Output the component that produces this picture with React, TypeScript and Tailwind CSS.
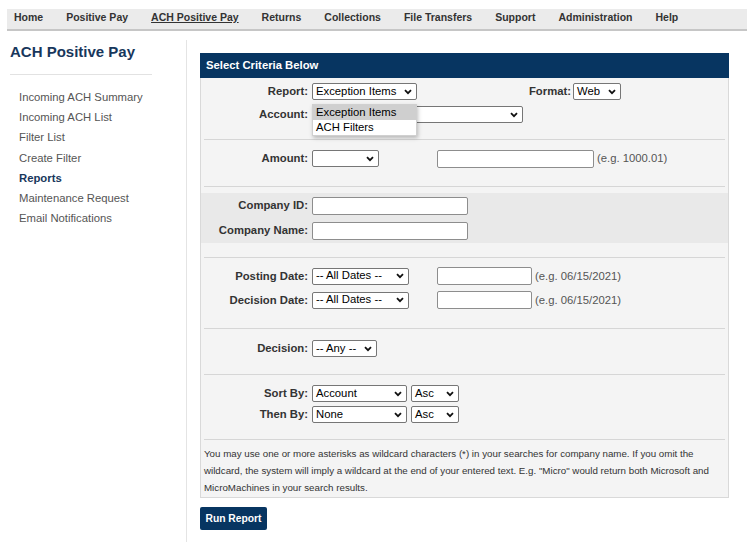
import React from "react";

const NAV = [
  "Home",
  "Positive Pay",
  "ACH Positive Pay",
  "Returns",
  "Collections",
  "File Transfers",
  "Support",
  "Administration",
  "Help",
];

const SIDE_LINKS = [
  "Incoming ACH Summary",
  "Incoming ACH List",
  "Filter List",
  "Create Filter",
  "Reports",
  "Maintenance Request",
  "Email Notifications",
];

const Chevron = () => (
  <svg width="8" height="6" viewBox="0 0 8 6" className="shrink-0">
    <path d="M1 1.2L4 4.2L7 1.2" fill="none" stroke="#111" strokeWidth="1.8" />
  </svg>
);

const Select = ({ value = "", className = "" }: { value?: string; className?: string }) => (
  <div
    className={`h-[17px] border border-[#767676] rounded-[2px] bg-white flex items-center justify-between pl-[3px] pr-[4px] text-[11.3px] text-black leading-none ${className}`}
  >
    <span className="whitespace-nowrap">{value}</span>
    <Chevron />
  </div>
);

const Input = ({ className = "" }: { className?: string }) => (
  <div className={`h-[18px] border border-[#8d8d8d] rounded-[2px] bg-white ${className}`} />
);

const Label = ({ children }: { children: React.ReactNode }) => (
  <span className="w-[107px] text-right font-bold text-[#333] whitespace-nowrap">{children}</span>
);

const Hint = ({ children }: { children: React.ReactNode }) => (
  <span className="ml-[-1px] text-[#555] whitespace-nowrap">{children}</span>
);

const Divider = () => <div className="mx-[3px] h-px bg-[#d6d6d6]" />;

export default function App() {
  return (
    <div className="w-[747px] h-[542px] overflow-hidden bg-white font-['Liberation_Sans',Arial,sans-serif] text-[11.3px]">
      {/* top navigation */}
      <nav className="mt-[9px] ml-[7px] h-[22px] pb-[3px] bg-[#ebebeb] border-b-2 border-[#c6c6c6] flex items-center gap-[23px] pl-[7px] text-[10.5px] font-bold text-[#333]">
        {NAV.map((item) => (
          <span key={item} className={item === "ACH Positive Pay" ? "underline" : ""}>
            {item}
          </span>
        ))}
      </nav>

      <div className="flex">
        {/* sidebar */}
        <aside className="w-[187px] h-[520px] mt-[9px] border-r border-[#e4e4e4] shrink-0">
          <div className="ml-[10px] w-[142px] pt-[3px] pb-[13px] border-b border-[#e2e2e2]">
            <h1 className="text-[15px] leading-[18px] font-bold text-[#18375c]">ACH Positive Pay</h1>
          </div>
          <ul className="mt-[12px] ml-[19px] text-[11.3px] text-[#555]">
            {SIDE_LINKS.map((link) => (
              <li
                key={link}
                className={`h-[20.2px] leading-[20px] ${link === "Reports" ? "font-bold text-[#18375c]" : ""}`}
              >
                {link}
              </li>
            ))}
          </ul>
        </aside>

        {/* criteria form */}
        <main className="ml-[13px] mt-[22px] w-[529px]">
          <div className="h-[25px] bg-[#073561] flex items-center px-[6px] text-white font-bold">
            Select Criteria Below
          </div>
          <div className="bg-[#f4f4f4] border-x border-b border-[#d9d9d9]">
            <section className="pt-[2px] pb-[13px]">
              <div className="h-[23px] flex items-center gap-[4px]">
                <Label>Report:</Label>
                <div className="relative">
                  <Select value="Exception Items" className="w-[105px]" />
                  <ul className="absolute left-0 top-[21px] w-[105px] z-10 bg-white border border-[#d0d0d0] shadow-[1px_2px_4px_rgba(0,0,0,0.25)] text-[11.3px] text-black">
                    <li className="h-[15px] leading-[15px] pl-[3px] bg-[#cfcfcf]">Exception Items</li>
                    <li className="h-[15px] leading-[15px] pl-[3px]">ACH Filters</li>
                  </ul>
                </div>
                <span className="w-[150px] text-right font-bold text-[#333]">Format:</span>
                <Select value="Web" className="w-[48px] ml-[-2px]" />
              </div>
              <div className="h-[23px] flex items-center gap-[4px]">
                <Label>Account:</Label>
                <Select className="w-[211px]" />
              </div>
            </section>
            <Divider />

            <section className="pt-[7px] pb-[16px]">
              <div className="h-[23px] flex items-center gap-[4px]">
                <Label>Amount:</Label>
                <Select className="w-[67px]" />
                <Input className="w-[157px] ml-[54px]" />
                <Hint>(e.g. 1000.01)</Hint>
              </div>
            </section>
            <Divider />

            <section className="pt-[6px] pb-[14px]">
              <div className="bg-[#e9e9e9]">
                <div className="h-[25px] flex items-center gap-[4px]">
                  <Label>Company ID:</Label>
                  <Input className="w-[156px]" />
                </div>
                <div className="h-[25px] flex items-center gap-[4px]">
                  <Label>Company Name:</Label>
                  <Input className="w-[156px]" />
                </div>
              </div>
            </section>
            <Divider />

            <section className="pt-[6px] pb-[16px]">
              <div className="h-[24px] flex items-center gap-[4px]">
                <Label>Posting Date:</Label>
                <Select value="-- All Dates --" className="w-[97px]" />
                <Input className="w-[95px] ml-[24px]" />
                <Hint>(e.g. 06/15/2021)</Hint>
              </div>
              <div className="h-[24px] flex items-center gap-[4px]">
                <Label>Decision Date:</Label>
                <Select value="-- All Dates --" className="w-[97px]" />
                <Input className="w-[95px] ml-[24px]" />
                <Hint>(e.g. 06/15/2021)</Hint>
              </div>
            </section>
            <Divider />

            <section className="pt-[8px] pb-[14px]">
              <div className="h-[23px] flex items-center gap-[4px]">
                <Label>Decision:</Label>
                <Select value="-- Any --" className="w-[65px]" />
              </div>
            </section>
            <Divider />

            <section className="pt-[8px] pb-[14px]">
              <div className="h-[21px] flex items-center gap-[4px]">
                <Label>Sort By:</Label>
                <Select value="Account" className="w-[95px]" />
                <Select value="Asc" className="w-[48px]" />
              </div>
              <div className="h-[21px] flex items-center gap-[4px]">
                <Label>Then By:</Label>
                <Select value="None" className="w-[95px]" />
                <Select value="Asc" className="w-[48px]" />
              </div>
            </section>
            <Divider />

            <p className="pt-[5px] pb-px pl-[3px] pr-[4px] text-[9.75px] leading-[17px] text-[#333]">
              You may use one or more asterisks as wildcard characters (*) in your searches for company name. If you
              omit the wildcard, the system will imply a wildcard at the end of your entered text. E.g. "Micro" would
              return both Microsoft and MicroMachines in your search results.
            </p>
          </div>

          <button className="mt-[9px] h-[23px] w-[67px] rounded-[2px] bg-[#073561] text-white font-bold text-[10.3px]">
            Run Report
          </button>
        </main>
      </div>
    </div>
  );
}
